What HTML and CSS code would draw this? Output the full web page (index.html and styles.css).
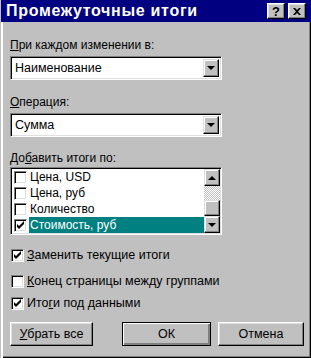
FILE: index.html
```html
<!DOCTYPE html>
<html lang="ru">
<head>
    <meta charset="UTF-8">
    <title>Промежуточные итоги</title>
    <link rel="stylesheet" href="styles.css">
</head>
<body>

<div class="window">
    <div class="titlebar">
        <span class="title">Промежуточные итоги</span>
        <div class="title-buttons">
            <span class="tbtn">?</span>
            <span class="tbtn">
                <svg width="8" height="7" viewBox="0 0 8 7"><path d="M0 0h2l2 2 2-2h2L5 3.5 8 7H6L4 5 2 7H0l3-3.5z" fill="#000"/></svg>
            </span>
        </div>
    </div>

    <div class="content">
        <div class="label"><u>П</u>ри каждом изменении в:</div>
        <div class="combo combo-first">
            <span class="combo-text">Наименование</span>
            <span class="combo-btn"><span class="arrow-down"></span></span>
        </div>

        <div class="label"><u>О</u>перация:</div>
        <div class="combo">
            <span class="combo-text">Сумма</span>
            <span class="combo-btn"><span class="arrow-down"></span></span>
        </div>

        <div class="label label-list">До<u>б</u>авить итоги по:</div>
        <div class="listbox">
            <ul class="items">
                <li class="item"><span class="box"></span><span class="item-text">Цена, USD</span></li>
                <li class="item"><span class="box"></span><span class="item-text">Цена, руб</span></li>
                <li class="item"><span class="box"></span><span class="item-text">Количество</span></li>
                <li class="item selected"><span class="box checked"></span><span class="item-text">Стоимость, руб</span></li>
            </ul>
            <div class="scrollbar">
                <span class="sbtn"><span class="arrow-up"></span></span>
                <span class="track"></span>
                <span class="thumb"></span>
                <span class="sbtn"><span class="arrow-down"></span></span>
            </div>
        </div>

        <div class="option opt-1"><span class="box checked"></span><span><u>З</u>аменить текущие итоги</span></div>
        <div class="option opt-2"><span class="box"></span><span><u>К</u>онец страницы между группами</span></div>
        <div class="option opt-3"><span class="box checked"></span><span>Ито<u>г</u>и под данными</span></div>

        <div class="actions">
            <button class="btn"><u>У</u>брать все</button>
            <button class="btn btn-default">ОК</button>
            <button class="btn">Отмена</button>
        </div>
    </div>
</div>

</body>
</html>
```

FILE: styles.css
```css
body {
    margin: 0;
    background-color: #c0c0c0;
    font-family: "Liberation Sans", Arial, sans-serif;
    font-size: 12px;
    color: #000;
}
.window {
    width: 311px;
    height: 358px;
    box-sizing: border-box;
    border-left: 1px solid #c0c0c0;
    box-shadow: inset 2px 0 0 #fff, inset -1px -1px 0 #000, inset -2px -2px 0 #808080;
    overflow: hidden;
}
.titlebar {
    height: 22px;
    background-color: #000080;
    display: flex;
    align-items: center;
    justify-content: space-between;
    padding: 0 5px 0 5px;
}
.title {
    color: #fff;
    font-weight: bold;
    font-size: 16px;
    letter-spacing: 0.7px;
}
.title-buttons {
    display: flex;
    gap: 3px;
}
.tbtn {
    width: 18px;
    height: 16px;
    box-sizing: border-box;
    background-color: #c0c0c0;
    border: 1px solid;
    border-color: #fff #000 #000 #fff;
    box-shadow: inset -1px -1px 0 #808080, inset 1px 1px 0 #dfdfdf;
    display: flex;
    align-items: center;
    justify-content: center;
    font-weight: bold;
    font-size: 13px;
    line-height: 1;
}
.content {
    padding: 16px 0 0 9px;
}
u {
    text-decoration: underline;
    text-underline-offset: 1px;
}
.label {
    height: 14px;
    line-height: 14px;
    margin-bottom: 4px;
}
.label-list {
    margin-bottom: 2px;
}
.combo {
    width: 212px;
    height: 24px;
    box-sizing: border-box;
    background-color: #fff;
    border: 1px solid;
    border-color: #808080 #fff #fff #808080;
    box-shadow: inset 1px 1px 0 #000, inset -1px -1px 0 #dfdfdf;
    display: flex;
    align-items: center;
    justify-content: space-between;
    padding: 2px 2px 2px 4px;
    margin-bottom: 14px;
    font-size: 12.5px;
}
.combo-first {
    margin-bottom: 15px;
}
.combo-btn, .sbtn {
    width: 16px;
    height: 18px;
    box-sizing: border-box;
    background-color: #c0c0c0;
    border: 1px solid;
    border-color: #dfdfdf #000 #000 #dfdfdf;
    box-shadow: inset -1px -1px 0 #808080, inset 1px 1px 0 #fff;
    display: flex;
    align-items: center;
    justify-content: center;
}
.arrow-down, .arrow-up {
    width: 0;
    height: 0;
    border-left: 4px solid transparent;
    border-right: 4px solid transparent;
}
.arrow-down {
    border-top: 4px solid #000;
}
.arrow-up {
    border-bottom: 4px solid #000;
}
.listbox {
    width: 212px;
    height: 68px;
    box-sizing: border-box;
    background-color: #fff;
    border: 1px solid;
    border-color: #808080 #fff #fff #808080;
    box-shadow: inset 1px 1px 0 #000, inset -1px -1px 0 #dfdfdf;
    padding: 1px;
    display: flex;
}
.items {
    list-style: none;
    margin: 0;
    padding: 0;
    flex: 1;
}
.item {
    height: 16px;
    display: flex;
    align-items: center;
}
.item .box {
    margin: 0 2px 0 2px;
}
.item-text {
    height: 16px;
    line-height: 16px;
    padding: 0 2px 0 1px;
    flex: 1;
}
.selected .item-text {
    background-color: #008080;
    color: #fff;
}
.scrollbar {
    width: 16px;
    display: flex;
    flex-direction: column;
}
.sbtn {
    height: 17px;
    width: 16px;
}
.track {
    height: 14px;
    background-color: #fff;
    background-image: repeating-conic-gradient(#c0c0c0 0 25%, #fff 0 50%);
    background-size: 2px 2px;
}
.thumb {
    height: 16px;
    box-sizing: border-box;
    background-color: #c0c0c0;
    border: 1px solid;
    border-color: #dfdfdf #000 #000 #dfdfdf;
    box-shadow: inset -1px -1px 0 #808080, inset 1px 1px 0 #fff;
}
.box {
    width: 13px;
    height: 13px;
    box-sizing: border-box;
    background-color: #fff;
    border: 1px solid;
    border-color: #808080 #fff #fff #808080;
    box-shadow: inset 1px 1px 0 #000, inset -1px -1px 0 #dfdfdf;
    flex: none;
}
.box.checked {
    background-image: url("data:image/svg+xml,%3Csvg xmlns='http://www.w3.org/2000/svg' width='11' height='11'%3E%3Cpath d='M2 4v3l2 2 5-5V1L4 6z' fill='%23000'/%3E%3C/svg%3E");
    background-repeat: no-repeat;
    background-position: 0 0;
}
.option {
    display: flex;
    align-items: center;
    gap: 3px;
    height: 16px;
    margin-left: 1px;
    font-size: 12.5px;
}
.opt-1 {
    margin-top: 12px;
}
.opt-2 {
    margin-top: 10px;
}
.opt-3 {
    margin-top: 6px;
}
.actions {
    display: flex;
    margin-top: 11px;
}
.btn {
    height: 24px;
    box-sizing: border-box;
    background-color: #c0c0c0;
    border: 1px solid;
    border-color: #fff #000 #000 #fff;
    box-shadow: inset -1px -1px 0 #808080, inset 1px 1px 0 #dfdfdf;
    font-family: inherit;
    font-size: 12.5px;
    color: #000;
    padding: 0;
    width: 83px;
    margin-right: 29px;
}
.btn-default {
    width: 89px;
    border: 1px solid #000;
    box-shadow: inset 1px 1px 0 #fff, inset -2px -2px 0 #808080, inset -1px -1px 0 #000;
    margin-right: 7px;
}
.btn:last-child {
    width: 86px;
    margin-right: 0;
}
```
